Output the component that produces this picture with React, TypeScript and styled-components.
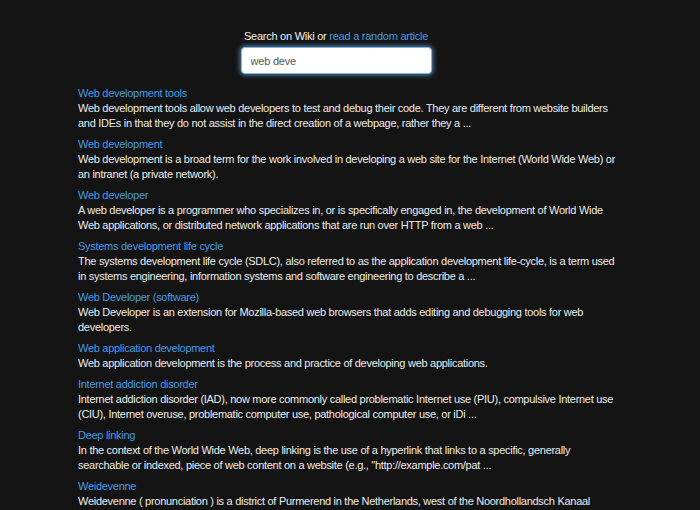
import React from "react";
import styled, { createGlobalStyle } from "styled-components";

const Global = createGlobalStyle`
  html, body { margin: 0; padding: 0; background: #141414; }
  body { font-family: "Liberation Sans", Arial, Helvetica, sans-serif; color: #ececec; }
`;

const Page = styled.div`
  width: 544px;
  margin: 0 auto;
  padding-top: 29px;
`;

const Header = styled.div`
  display: flex;
  flex-direction: column;
  align-items: center;
  gap: 3px;
  margin-right: 28px;
`;

const Prompt = styled.div`
  font-size: 11px;
  line-height: 15px;
  letter-spacing: -0.25px;
  color: #f0f0f0;
`;

const Link = styled.a`
  color: #4a9ae0;
  text-decoration: none;
`;

const SearchInput = styled.input`
  box-sizing: border-box;
  width: 191px;
  height: 27px;
  padding: 0 9px;
  border: 1px solid #7fb3e6;
  border-radius: 4px;
  background: #fff;
  font-family: "Liberation Sans", Arial, sans-serif;
  font-size: 11px;
  letter-spacing: -0.2px;
  color: #555;
  outline: none;
  box-shadow: 0 0 5px 1px rgba(102, 175, 233, 0.75);
`;

const Results = styled.div`
  margin-top: 12px;
  display: flex;
  flex-direction: column;
  gap: 6px;
`;

const Item = styled.div`
  font-size: 11px;
  line-height: 15px;
  letter-spacing: -0.28px;
`;

const Title = styled.a`
  display: block;
  color: #4a9ae0;
  text-decoration: none;
`;

const Desc = styled.div`
  color: #ececec;
`;

const data: [string, string][] = [
  ["Web development tools", "Web development tools allow web developers to test and debug their code. They are different from website builders and IDEs in that they do not assist in the direct creation of a webpage, rather they a ..."],
  ["Web development", "Web development is a broad term for the work involved in developing a web site for the Internet (World Wide Web) or an intranet (a private network)."],
  ["Web developer", "A web developer is a programmer who specializes in, or is specifically engaged in, the development of World Wide Web applications, or distributed network applications that are run over HTTP from a web ..."],
  ["Systems development life cycle", "The systems development life cycle (SDLC), also referred to as the application development life-cycle, is a term used in systems engineering, information systems and software engineering to describe a ..."],
  ["Web Developer (software)", "Web Developer is an extension for Mozilla-based web browsers that adds editing and debugging tools for web developers."],
  ["Web application development", "Web application development is the process and practice of developing web applications."],
  ["Internet addiction disorder", "Internet addiction disorder (IAD), now more commonly called problematic Internet use (PIU), compulsive Internet use (CIU), Internet overuse, problematic computer use, pathological computer use, or iDi ..."],
  ["Deep linking", "In the context of the World Wide Web, deep linking is the use of a hyperlink that links to a specific, generally searchable or indexed, piece of web content on a website (e.g., \"http://example.com/pat ..."],
  ["Weidevenne", "Weidevenne ( pronunciation ) is a district of Purmerend in the Netherlands, west of the Noordhollandsch Kanaal (North\u00a0Holland\u00a0Canal), east of the Purmer polder. The district ..."],
];

export default function App() {
  return (
    <>
      <Global />
      <Page>
        <Header>
          <Prompt>
            Search on Wiki or <Link href="#">read a random article</Link>
          </Prompt>
          <SearchInput defaultValue="web deve" />
        </Header>
        <Results>
          {data.map(([t, d]) => (
            <Item key={t}>
              <Title href="#">{t}</Title>
              <Desc>{d}</Desc>
            </Item>
          ))}
        </Results>
      </Page>
    </>
  );
}
